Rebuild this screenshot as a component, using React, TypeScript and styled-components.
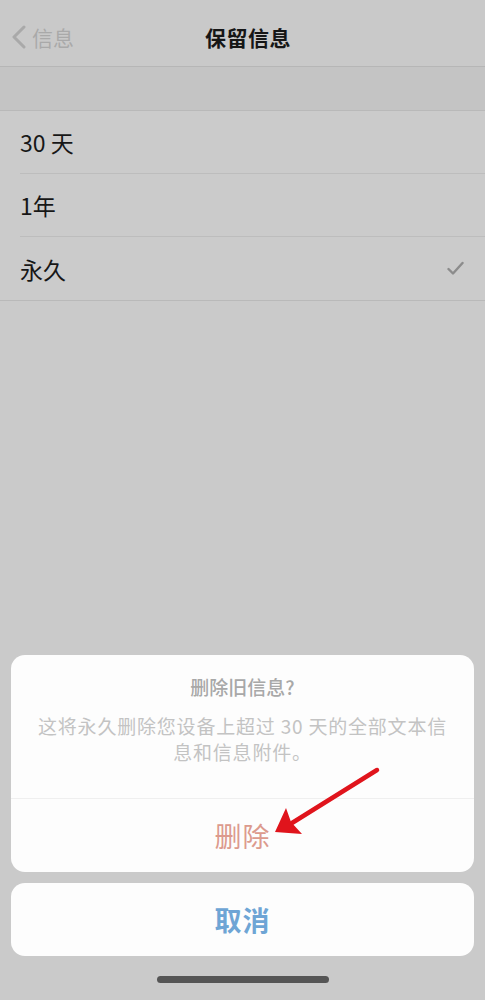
import React from "react";
import styled, { createGlobalStyle } from "styled-components";

const GlobalStyle = createGlobalStyle`
  html, body {
    margin: 0;
    padding: 0;
    background: #cacaca;
  }
  body {
    font-family: "Noto Sans CJK SC", "Noto Sans", sans-serif;
    -webkit-font-smoothing: antialiased;
  }
  * { box-sizing: border-box; }
`;

const Page = styled.div`
  position: relative;
  width: 485px;
  height: 1000px;
  display: flex;
  flex-direction: column;
  background: #cacaca;
  overflow: hidden;
`;

const NavBar = styled.header`
  height: 67px;
  display: grid;
  grid-template-columns: 1fr auto 1fr;
  align-items: center;
  padding: 7px 0 0 11px;
  background: #c9c9c9;
  border-bottom: 1px solid #b6b6b6;
`;

const BackButton = styled.div`
  display: flex;
  align-items: center;
  gap: 5px;
  color: #a9a9a9;
  font-size: 21px;
`;

const NavTitle = styled.div`
  font-size: 21px;
  font-weight: 600;
  color: #161616;
  letter-spacing: 0.5px;
`;

const SectionGap = styled.div`
  height: 44px;
  background: #c4c4c4;
  border-bottom: 1px solid #b9b9b9;
`;

const List = styled.div`
  background: #cbcbcb;
  border-bottom: 1px solid #b9b9b9;
`;

const Row = styled.div<{ $last?: boolean }>`
  height: 63px;
  display: flex;
  align-items: center;
  justify-content: space-between;
  margin-left: 20px;
  padding-right: 20px;
  border-bottom: ${(p) => (p.$last ? "none" : "1px solid #bdbdbd")};
  font-size: 23px;
  color: #171717;
`;

const Fill = styled.div`
  flex: 1;
`;

const Sheet = styled.div`
  display: flex;
  flex-direction: column;
  gap: 11px;
  padding: 0 11px;
`;

const Card = styled.div`
  background: #fdfdfd;
  border-radius: 14px;
  overflow: hidden;
`;

const AlertHeader = styled.div`
  display: flex;
  flex-direction: column;
  align-items: center;
  text-align: center;
  padding: 20px 26px 33px;
  border-bottom: 1px solid #efefef;
`;

const AlertTitle = styled.div`
  font-size: 19px;
  font-weight: 500;
  line-height: 24px;
  color: #a8a8a8;
  margin-bottom: 14px;
`;

const AlertMessage = styled.div`
  font-size: 19px;
  line-height: 26px;
  letter-spacing: 0.8px;
  color: #c3c3c3;
`;

const ActionButton = styled.div<{ $tone: "destructive" | "cancel" }>`
  height: 73px;
  display: flex;
  align-items: center;
  justify-content: center;
  font-size: 27px;
  font-weight: ${(p) => (p.$tone === "cancel" ? 700 : 400)};
  color: ${(p) => (p.$tone === "cancel" ? "#6ea5d5" : "#dc9a8d")};
  letter-spacing: 1px;
`;

const HomeArea = styled.div`
  height: 44px;
  display: flex;
  align-items: center;
  justify-content: center;
  padding-top: 2px;
`;

const HomeIndicator = styled.div`
  width: 172px;
  height: 7px;
  border-radius: 4px;
  background: #555555;
`;

const Annotation = styled.svg`
  position: absolute;
  left: 0;
  top: 0;
  width: 485px;
  height: 1000px;
  pointer-events: none;
`;

const Check = styled.svg`
  width: 17px;
  height: 15px;
  margin-right: 1px;
`;

export default function App() {
  return (
    <>
      <GlobalStyle />
      <Page>
        <NavBar>
          <BackButton>
            <svg width="16" height="24" viewBox="0 0 16 24">
              <path
                d="M13 2 L3 12 L13 22"
                fill="none"
                stroke="#a9a9a9"
                strokeWidth="3"
                strokeLinecap="round"
                strokeLinejoin="round"
              />
            </svg>
            <span>信息</span>
          </BackButton>
          <NavTitle>保留信息</NavTitle>
          <div />
        </NavBar>
        <SectionGap />
        <List>
          <Row>30 天</Row>
          <Row>1年</Row>
          <Row $last>
            <span>永久</span>
            <Check viewBox="0 0 17 15">
              <path
                d="M1.5 8 L6 12.5 L15.5 2"
                fill="none"
                stroke="#8c8c8c"
                strokeWidth="2.4"
                strokeLinecap="round"
                strokeLinejoin="round"
              />
            </Check>
          </Row>
        </List>
        <Fill />
        <Sheet>
          <Card>
            <AlertHeader>
              <AlertTitle>删除旧信息?</AlertTitle>
              <AlertMessage>
                这将永久删除您设备上超过 30 天的全部文本信息和信息附件。
              </AlertMessage>
            </AlertHeader>
            <ActionButton $tone="destructive">删除</ActionButton>
          </Card>
          <Card>
            <ActionButton $tone="cancel">取消</ActionButton>
          </Card>
        </Sheet>
        <HomeArea>
          <HomeIndicator />
        </HomeArea>
        <Annotation viewBox="0 0 485 1000">
          <line
            x1="377"
            y1="770"
            x2="292"
            y2="823"
            stroke="#e0141c"
            strokeWidth="4.5"
            strokeLinecap="round"
          />
          <path d="M275 832 L286 808 L291 822 L302 834 Z" fill="#e0141c" />
        </Annotation>
      </Page>
    </>
  );
}
